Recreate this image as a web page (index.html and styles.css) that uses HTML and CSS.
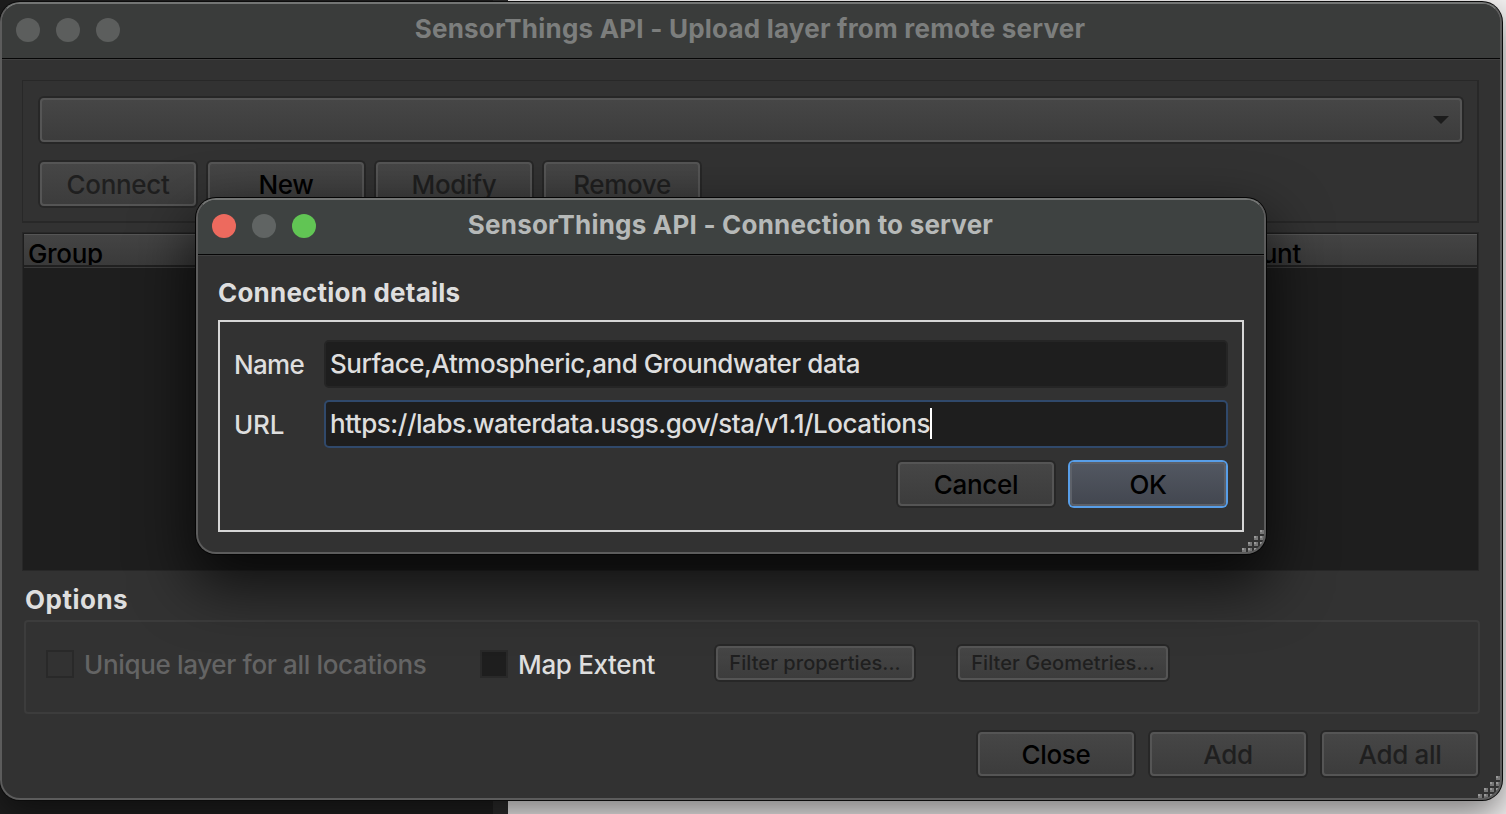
FILE: index.html
```
<!DOCTYPE html>
<html lang="en">
<head>
<meta charset="utf-8">
<title>SensorThings API</title>
<link rel="stylesheet" href="styles.css">
</head>
<body>
<main class="desktop">
  <div class="backdrop-dark"></div>
  <div class="backdrop-edge"></div>

  <section class="window window-main">
    <header class="titlebar">
      <div class="lights"><i class="light"></i><i class="light"></i><i class="light"></i></div>
      <h1 class="title">SensorThings API - Upload layer from remote server</h1>
    </header>
    <div class="main-body">
      <div class="server-panel">
        <div class="combo">
          <svg class="arrow" width="16" height="8" viewBox="0 0 16 8"><path d="M0 0H16L8 8Z"/></svg>
        </div>
        <div class="button-row">
          <button class="btn disabled">Connect</button>
          <button class="btn">New</button>
          <button class="btn disabled">Modify</button>
          <button class="btn disabled">Remove</button>
        </div>
      </div>
      <div class="table">
        <div class="table-head"><span>Group</span><span class="count">Count</span></div>
      </div>
      <h2 class="heading options-heading">Options</h2>
      <div class="options">
        <span class="check off"></span>
        <span class="check-label off-label">Unique layer for all locations</span>
        <span class="check check-extent"></span>
        <span class="check-label">Map Extent</span>
        <button class="btn small disabled filter-props">Filter properties...</button>
        <button class="btn small disabled filter-geoms">Filter Geometries...</button>
      </div>
      <div class="footer">
        <button class="btn">Close</button>
        <button class="btn disabled">Add</button>
        <button class="btn disabled">Add all</button>
      </div>
    </div>
    <svg class="grip" width="22" height="22" viewBox="0 0 22 22">
      <path d="M18 0h4v4h-4zM12 6h4v4h-4zM18 6h4v4h-4zM6 12h4v4h-4zM12 12h4v4h-4zM18 12h4v4h-4zM0 18h4v4h-4zM6 18h4v4h-4zM12 18h4v4h-4zM18 18h4v4h-4z" fill="#777"/>
      <path d="M18 0h2v2h-2zM12 6h2v2h-2zM18 6h2v2h-2zM6 12h2v2h-2zM12 12h2v2h-2zM18 12h2v2h-2zM0 18h2v2h-2zM6 18h2v2h-2zM12 18h2v2h-2zM18 18h2v2h-2z" fill="#999"/>
    </svg>
  </section>

  <section class="window dialog">
    <header class="titlebar">
      <div class="lights"><i class="light red"></i><i class="light"></i><i class="light green"></i></div>
      <h1 class="title">SensorThings API - Connection to server</h1>
    </header>
    <div class="dialog-body">
      <h2 class="heading">Connection details</h2>
      <div class="details">
        <label class="label">Name</label>
        <div class="field">Surface,Atmospheric,and Groundwater data</div>
        <label class="label url-label">URL</label>
        <div class="field focused">https://labs.waterdata.usgs.gov/sta/v1.1/Locations<i class="caret"></i></div>
        <div class="dialog-actions">
          <button class="btn">Cancel</button>
          <button class="btn primary">OK</button>
        </div>
      </div>
    </div>
    <svg class="grip" width="22" height="22" viewBox="0 0 22 22">
      <path d="M18 0h4v4h-4zM12 6h4v4h-4zM18 6h4v4h-4zM6 12h4v4h-4zM12 12h4v4h-4zM18 12h4v4h-4zM0 18h4v4h-4zM6 18h4v4h-4zM12 18h4v4h-4zM18 18h4v4h-4z" fill="#777"/>
      <path d="M18 0h2v2h-2zM12 6h2v2h-2zM18 6h2v2h-2zM6 12h2v2h-2zM12 12h2v2h-2zM18 12h2v2h-2zM0 18h2v2h-2zM6 18h2v2h-2zM12 18h2v2h-2zM18 18h2v2h-2z" fill="#999"/>
    </svg>
  </section>
</main>
</body>
</html>
```
FILE: styles.css
```
* { box-sizing: border-box; }
body { margin: 0; }
h1, h2 { margin: 0; font-size: 26px; font-weight: 700; letter-spacing: 0.21px; }

.desktop {
  position: relative;
  width: 1506px;
  height: 814px;
  overflow: hidden;
  background: #f4f2f2;
  font: 450 26px/30px Inter, "Liberation Sans", sans-serif;
  letter-spacing: -0.34px;
  color: #dedede;
}
.backdrop-dark { position: absolute; inset: 0 auto 0 0; width: 493px; background: #1e1e1e; }
.backdrop-edge { position: absolute; inset: 0 auto 0 493px; width: 15px; background: #2c2c2c; }

.window {
  position: absolute;
  background: #323232;
  border: 2px solid #5c5c5c;
  border-top-color: #737574;
  border-radius: 20px;
}
.window-main {
  left: 0;
  top: 2px;
  width: 1502px;
  height: 798px;
  box-shadow: 0 0 0 1px #0c0c0c, 0 14px 36px rgba(0, 0, 0, 0.5);
}
.dialog {
  left: 196px;
  top: 198px;
  width: 1070px;
  height: 356px;
  box-shadow: 0 0 0 1px #050505, 0 26px 60px 4px rgba(0, 0, 0, 0.72);
}

.titlebar {
  position: relative;
  display: flex;
  align-items: center;
  justify-content: center;
  height: 55px;
  padding: 0 2px 6px 0;
  border-radius: 18px 18px 0 0;
  background: linear-gradient(#3a3c3b 54px, #060606 54px);
  box-shadow: 0 1px 0 #404040;
}
.dialog .titlebar { padding-right: 1px; background: linear-gradient(#3e4241 54px, #060606 54px); }
.title { color: #7c7e7d; }
.dialog .title { color: #b6b9b8; }
.lights { position: absolute; left: 14px; top: 14px; display: flex; gap: 16px; }
.light { width: 24px; height: 24px; border-radius: 50%; background: #5c5e5d; }
.dialog .light { background: #606463; }
.dialog .light.red { background: #ed6a5e; }
.dialog .light.green { background: #61c554; }

.main-body { padding: 21px 20px 0; }
.server-panel {
  width: 1457px;
  height: 143px;
  padding: 17px 0 0 17px;
  border: solid #282828;
  border-width: 1px 2px 2px 1px;
}
.combo, .btn {
  border: 2px solid #555;
  border-radius: 4px;
  background: linear-gradient(#464646, #3c3c3c);
  box-shadow: 0 0 0 2px #272727;
}
.combo { display: flex; justify-content: flex-end; width: 1422px; height: 44px; padding: 16px 11px 0; }
.arrow { fill: #1c1c1c; }
.button-row { display: flex; gap: 12px; margin-top: 20px; }
.btn {
  width: 156px;
  height: 44px;
  padding: 2px 0 0;
  font: inherit;
  letter-spacing: inherit;
  color: #000;
}
.btn.disabled { color: #1f1f1f; }
.btn.primary {
  border-color: #5d6169;
  background: linear-gradient(#525761, #434750);
  box-shadow: 0 0 0 2px #589ee8;
}
.btn.small { height: 34px; padding: 0; font-size: 20px; line-height: 26px; letter-spacing: 0.06px; margin-top: -2px; }

.table { width: 1457px; height: 339px; margin-top: 9px; padding: 1px 1px; border: 1px solid #282828; background: #1e1e1e; }
.table-head {
  display: flex;
  height: 35px;
  padding-left: 4px;
  overflow: hidden;
  border-top: 1px solid #555;
  background: linear-gradient(#444, #3a3a3a 30px, #202020 30px, #202020 32px, #3a3a3a 32px, #3a3a3a 33px, #1e1e1e 33px);
  color: #000;
  line-height: 38px;
}
.table-head span { height: 30px; overflow: hidden; }
.table-head .count { margin-left: 1125px; }

.heading { line-height: 30px; }
.options-heading { padding: 14px 0 0 3px; height: 49px; letter-spacing: 0.5px; }
.options {
  display: flex;
  align-items: center;
  width: 1456px;
  height: 94px;
  margin-left: 2px;
  padding: 0 0 6px 20px;
  border: 2px solid #3c3c3c;
  border-radius: 4px;
}
.check { width: 28px; height: 28px; border: 2px solid #292929; background: #1e1e1e; }
.check.off { background: transparent; }
.check-extent { margin-left: 52px; }
.check-label { width: 138px; margin-left: 10px; margin-top: 1px; white-space: nowrap; }
.off-label { width: 344px; color: #646464; }
.filter-props { width: 198px; margin-left: 60px; }
.filter-geoms { width: 210px; margin-left: 44px; }
.footer { display: flex; justify-content: flex-end; gap: 16px; width: 1456px; margin-top: 18px; }

.dialog-body { padding: 23px 20px 0; }
.dialog-body .heading { height: 42px; }
.details {
  display: grid;
  grid-template-columns: 90px 904px;
  grid-template-rows: 48px 48px 48px;
  row-gap: 12px;
  align-items: center;
  width: 1026px;
  height: 212px;
  padding: 18px 0 0 14px;
  border: 2px solid #d6d6d6;
}
.field {
  display: flex;
  align-items: center;
  height: 48px;
  padding: 0 0 1px 4px;
  border: 2px solid #252525;
  border-radius: 5px;
  background: #1e1e1e;
  white-space: nowrap;
  letter-spacing: -0.47px;
}
.focused { border-color: #30496b; }
.caret { width: 2px; height: 31px; background: #fff; }
.label { padding-top: 1px; letter-spacing: -0.7px; }
.url-label { letter-spacing: -0.2px; }
.dialog-actions { grid-column: 1 / 3; display: flex; justify-content: flex-end; gap: 16px; padding-right: 2px; }

.grip { position: absolute; right: 0; bottom: 0; clip-path: inset(0 0 0 0 round 0 0 18px 0); }
```
